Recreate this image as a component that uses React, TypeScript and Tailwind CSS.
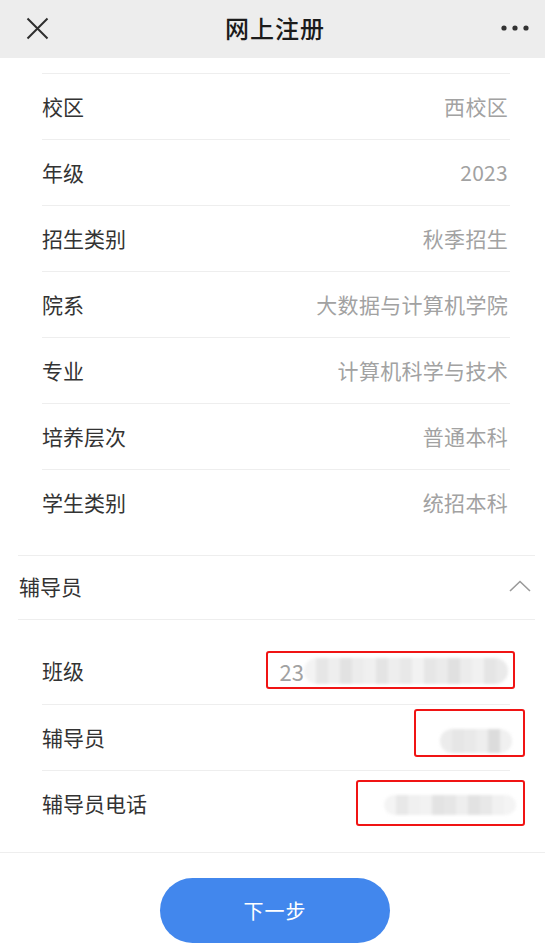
import React from "react";

const font = { fontFamily: '"Noto Sans CJK SC", "Noto Sans", sans-serif' };

const rows: [string, string][] = [
  ["校区", "西校区"],
  ["年级", "2023"],
  ["招生类别", "秋季招生"],
  ["院系", "大数据与计算机学院"],
  ["专业", "计算机科学与技术"],
  ["培养层次", "普通本科"],
  ["学生类别", "统招本科"],
];

function Blur({ shades, h }: { shades: string[]; h: number }) {
  return (
    <span className="flex blur-[1.5px] rounded-full overflow-hidden" style={{ height: h }}>
      {shades.map((c, i) => (
        <span key={i} className="w-[12px] h-full" style={{ background: c }} />
      ))}
    </span>
  );
}

export default function App() {
  return (
    <div className="w-[545px] h-[947px] bg-white overflow-hidden relative" style={font}>
      {/* header */}
      <div className="h-[58px] bg-[#ededed] flex items-center justify-between px-[26px]">
        <svg width="23" height="23" viewBox="0 0 23 23" className="mb-[2px]">
          <path d="M1.5 1.5 L21.5 21.5 M21.5 1.5 L1.5 21.5" stroke="#2e2e2e" strokeWidth="2" fill="none" />
        </svg>
        <div className="text-[24px] text-[#1b1b1b] font-medium tracking-[1px] mb-[3px]">网上注册</div>
        <svg width="28" height="6" viewBox="0 0 28 6" className="mr-[-10px] mb-[2px]">
          <circle cx="3" cy="3" r="2.6" fill="#333" />
          <circle cx="14" cy="3" r="2.6" fill="#333" />
          <circle cx="25" cy="3" r="2.6" fill="#333" />
        </svg>
      </div>

      {/* info list */}
      <div className="pt-[15px] pl-[42px] pr-[35px] pb-[20px]">
        {rows.map(([k, v]) => (
          <div key={k} className="h-[66px] border-t border-[#eeeeee] flex items-center justify-between text-[21px]">
            <span className="text-[#333]">{k}</span>
            <span className="text-[#a2a2a2] mr-[2px] tracking-[0.3px]">{v}</span>
          </div>
        ))}
      </div>

      {/* section header */}
      <div className="mx-[18px] mr-[10px] border-t border-b border-[#eeeeee] h-[65px] flex items-center justify-between">
        <span className="text-[21px] text-[#333] ml-[1px] mb-[2px]">辅导员</span>
        <svg width="22" height="12" viewBox="0 0 22 12" className="mr-[4px] mb-[3px]">
          <path d="M1 11 L11 1.5 L21 11" stroke="#9a9a9a" strokeWidth="1.6" fill="none" />
        </svg>
      </div>

      {/* counselor rows */}
      <div className="pt-[18px] pl-[42px] pr-[35px] pb-[16px] border-b border-[#eeeeee]">
        <div className="h-[66px] flex items-center justify-between text-[21px] relative">
          <span className="text-[#333]">班级</span>
          <span className="flex items-center text-[#a2a2a2] mr-[2px]">
            <span className="text-[22px]">23</span>
            <Blur h={26} shades={["#f3f3f3", "#e6e6e6", "#eeeeee", "#e2e2e2", "#ececec", "#f0f0f0", "#e4e4e4", "#eeeeee", "#e8e8e8", "#f2f2f2", "#e6e6e6", "#ebebeb", "#e0e0e0", "#ececec", "#f1f1f1", "#e5e5e5", "#eaeaea"]} />
          </span>
          <div className="absolute left-[224px] top-[13px] w-[249px] h-[38px] border-2 border-[#f01414] rounded-[3px]" />
        </div>
        <div className="h-[66px] border-t border-[#eeeeee] flex items-center justify-between text-[21px] relative">
          <span className="text-[#333]">辅导员</span>
          <span className="mr-[-2px] mt-[6px]">
            <Blur h={24} shades={["#ececec", "#e6e6e6", "#e9e9e9", "#eeeeee", "#dcdcdc", "#f0f0f0"]} />
          </span>
          <div className="absolute left-[372px] top-[4px] w-[111px] h-[48px] border-2 border-[#f01414] rounded-[3px]" />
        </div>
        <div className="h-[66px] border-t border-[#eeeeee] flex items-center justify-between text-[21px] relative">
          <span className="text-[#333]">辅导员电话</span>
          <span className="mr-[-6px] mt-[2px]">
            <Blur h={20} shades={["#f4f4f4", "#e8e8e8", "#f0f0f0", "#f2f2f2", "#e3e3e3", "#e6e6e6", "#eeeeee", "#e2e2e2", "#e8e8e8", "#f1f1f1", "#f4f4f4"]} />
          </span>
          <div className="absolute left-[314px] top-[9px] w-[169px] h-[46px] border-2 border-[#f01414] rounded-[3px]" />
        </div>
      </div>

      {/* button */}
      <div className="flex justify-center pt-[25px] pl-[5px]">
        <button className="w-[230px] h-[65px] rounded-full bg-[#4287ed] text-white text-[20px] tracking-[1px]">
          下一步
        </button>
      </div>
    </div>
  );
}
